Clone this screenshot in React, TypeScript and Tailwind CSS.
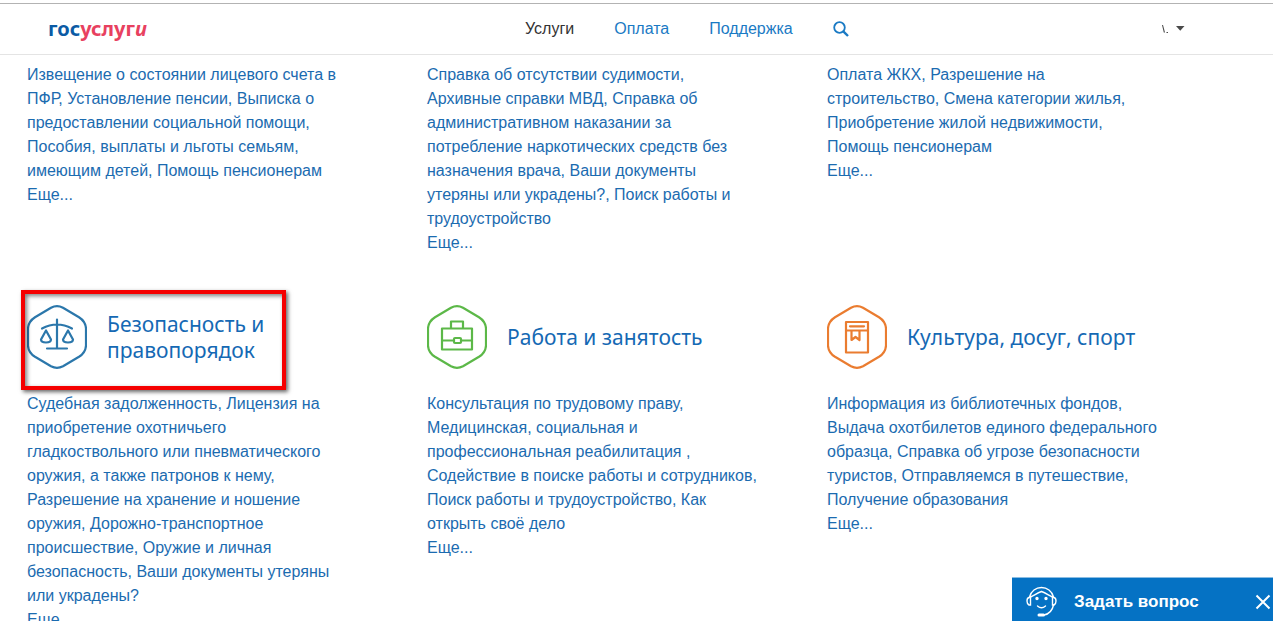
import { Fragment, type ReactNode } from 'react';

const HEXAGON = 'M24 2.8Q30 -.4 36 2.8L52 12.2Q58.6 16.4 59 23.5V40.5Q58.6 47.6 52 51.8L36 61.2Q30 64.4 24 61.2L8 51.8Q1.4 47.6 1 40.5V23.5Q1.4 16.4 8 12.2Z';

function Badge({ className, children }: { className: string; children: ReactNode }) {
  return (
    <svg
      viewBox="0 0 60 64"
      className={`h-16 w-[60px] shrink-0 ${className}`}
      fill="none"
      stroke="currentColor"
      strokeWidth="2.2"
      strokeLinejoin="round"
      strokeLinecap="round"
      aria-hidden="true"
    >
      <path d={HEXAGON} />
      {children}
    </svg>
  );
}

function ScalesIcon() {
  return (
    <Badge className="text-[#2b77ab]">
      <path d="M30 14.5V43.5M20 43.5H40M15 23.5Q22.5 19.5 30 19.5T45 23.5" />
      <path d="M19 25.5L14 34.5Q14 37.5 19 37.5T24 34.5Z" />
      <path d="M41 25.5L36 34.5Q36 37.5 41 37.5T46 34.5Z" />
    </Badge>
  );
}

function BriefcaseIcon() {
  return (
    <Badge className="text-[#5cb848]">
      <path d="M15 23.5H45V44.5H15ZM24 23.5V16.5H36V23.5M15 35.5H27M34 35.5H45" />
      <rect x="27" y="33" width="7" height="5" rx="1" />
    </Badge>
  );
}

function BookIcon() {
  return (
    <Badge className="text-[#ea7c30]">
      <path d="M19 17H41V47.5H19ZM19 25.5H41M23 21.3H37" />
      <path d="M24.5 26V35L28.5 32L32.5 35V26" />
    </Badge>
  );
}

type Topic = { title?: string; icon?: ReactNode; marked?: boolean; services: string[] };

const upper: Topic[] = [
  {
    services: [
      'Извещение о состоянии лицевого счета в ПФР',
      'Установление пенсии',
      'Выписка о предоставлении социальной помощи',
      'Пособия, выплаты и льготы семьям, имеющим детей',
      'Помощь пенсионерам',
    ],
  },
  {
    services: [
      'Справка об отсутствии судимости',
      'Архивные справки МВД',
      'Справка об административном наказании за потребление наркотических средств без назначения врача',
      'Ваши документы утеряны или украдены?',
      'Поиск работы и трудоустройство',
    ],
  },
  {
    services: [
      'Оплата ЖКХ',
      'Разрешение на строительство',
      'Смена категории жилья',
      'Приобретение жилой недвижимости',
      'Помощь пенсионерам',
    ],
  },
];

const lower: Topic[] = [
  {
    title: 'Безопасность и правопорядок',
    icon: <ScalesIcon />,
    marked: true,
    services: [
      'Судебная задолженность',
      'Лицензия на приобретение охотничьего гладкоствольного или пневматического оружия, а также патронов к нему',
      'Разрешение на хранение и ношение оружия',
      'Дорожно-транспортное происшествие',
      'Оружие и личная безопасность',
      'Ваши документы утеряны или украдены?',
    ],
  },
  {
    title: 'Работа и занятость',
    icon: <BriefcaseIcon />,
    services: [
      'Консультация по трудовому праву',
      'Медицинская, социальная и профессиональная реабилитация ',
      'Содействие в поиске работы и сотрудников',
      'Поиск работы и трудоустройство',
      'Как открыть своё дело',
    ],
  },
  {
    title: 'Культура, досуг, спорт',
    icon: <BookIcon />,
    services: [
      'Информация из библиотечных фондов',
      'Выдача охотбилетов единого федерального образца',
      'Справка об угрозе безопасности туристов',
      'Отправляемся в путешествие',
      'Получение образования',
    ],
  },
];

function TopicBlock({ topic }: { topic: Topic }) {
  return (
    <section>
      {topic.title && (
        <div className="relative mb-[23px] flex h-16 items-center gap-5">
          {topic.icon}
          <h2 className="max-w-[240px] font-['Noto_Sans','Open_Sans',sans-serif] text-[21px] leading-[26px] text-[#1569b4] [font-kerning:none]">
            <a href="#topic">{topic.title}</a>
          </h2>
          {topic.marked && (
            <div className="pointer-events-none absolute -top-[15px] -left-1.5 h-[100px] w-[265px] border-4 border-[#f50000] shadow-[2px_2px_4px_rgba(0,0,0,0.6),inset_2px_2px_4px_rgba(0,0,0,0.5)]" />
          )}
        </div>
      )}
      <p>
        {topic.services.map((service, i) => (
          <Fragment key={service}>
            <a href="#service" className="hover:underline">{service}</a>
            {i < topic.services.length - 1 && ', '}
          </Fragment>
        ))}
      </p>
      <a href="#more" className="hover:underline">Еще...</a>
    </section>
  );
}

export default function App() {
  return (
    <div className="h-screen overflow-x-hidden overflow-y-auto bg-white font-['Liberation_Sans',Arial,sans-serif] text-base text-[#1b6bb0] [scrollbar-width:none]">
      <header className="sticky top-0 z-10 bg-white pt-[3px]">
        <div className="grid h-[52px] grid-cols-[477px_1fr_auto] items-center border-t border-b border-t-[#b3b3b3] border-b-[#e4e4e4] pr-[88px] pl-12">
          <a href="#home" className="font-['Noto_Sans','Open_Sans',sans-serif] text-xl font-bold text-[#0b5ba5]">
            гос<span className="text-[#e8415f]">услуг<span className="italic">и</span></span>
          </a>
          <nav className="flex items-center gap-10">
            <a href="#services" className="text-[#333333]">Услуги</a>
            <a href="#payment" className="text-[#1a7ac4]">Оплата</a>
            <a href="#support" className="text-[#1a7ac4]">Поддержка</a>
            <button type="button" aria-label="Поиск" className="text-[#1a7ac4]">
              <svg viewBox="0 0 16 16" className="size-4" fill="none" stroke="currentColor" aria-hidden="true">
                <circle cx="6.5" cy="6.5" r="5.3" strokeWidth="1.8" />
                <path d="M10.3 10.3L15 15" strokeWidth="2.4" />
              </svg>
            </button>
          </nav>
          <button type="button" aria-label="Профиль" className="text-[#4a4a4a]">
            <svg viewBox="0 0 24 12" className="h-3 w-6" fill="currentColor" aria-hidden="true">
              <path d="M1 2L2 2L4 9.5L2.8 9.5ZM5.5 9H7V10H5.5ZM15 3H23.5L19.25 7.8Z" />
            </svg>
          </button>
        </div>
      </header>

      <main className="max-w-[1186px] px-[27px] pt-2 pb-12 leading-6">
        <div className="grid grid-cols-3 gap-[68px]">
          {upper.map((topic) => (
            <TopicBlock key={topic.services[0]} topic={topic} />
          ))}
        </div>
        <div className="mt-[50px] grid grid-cols-3 gap-[68px]">
          {lower.map((topic) => (
            <TopicBlock key={topic.title} topic={topic} />
          ))}
        </div>
      </main>

      <aside className="fixed right-0 bottom-0 z-20 flex h-11 w-[261px] items-center justify-between border-t border-[#8abde3] bg-[#0572c4] pt-1 pr-0.5 pl-3.5 text-white">
        <button type="button" className="flex items-center gap-4 text-[17px] font-bold">
          <svg viewBox="0 0 32 32" className="size-8" fill="none" stroke="currentColor" strokeWidth="1.4" strokeLinecap="round" aria-hidden="true">
            <path d="M3.5 11C5 5 10 1.5 15.5 1.5S26 5 27.5 11M4.5 11C8 9.5 11 7 15.5 5.5C20 7 23 9.5 26.5 11M27.5 19C26.5 24 23 28 18 29" />
            <path d="M4.5 11.5H3Q1 12 1 15T3 19H4.5ZM26.5 11.5H28Q30 12 30 15T28 19H26.5Z" />
            <path d="M13 29H17.5" strokeWidth="3" />
            <path d="M11.5 20Q15.500 23.500 19.500 20" />
            <path d="M11 12.5V12.6M20 12.5V12.6" strokeWidth="3.4" />
          </svg>
          Задать вопрос
        </button>
        <button type="button" aria-label="Закрыть">
          <svg viewBox="0 0 16 16" className="size-4" stroke="currentColor" strokeWidth="2" aria-hidden="true">
            <path d="M1.5 1.5L14.5 14.5M14.5 1.5L1.5 14.5" />
          </svg>
        </button>
      </aside>
    </div>
  );
}
